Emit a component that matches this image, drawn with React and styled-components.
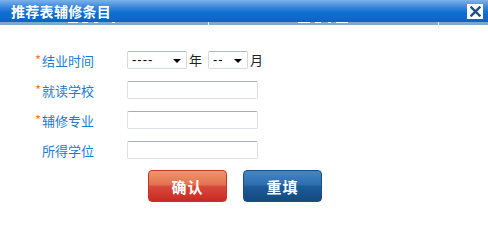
import React from 'react'
import styled, { createGlobalStyle } from 'styled-components'

const GlobalStyle = createGlobalStyle`
    html, body {
        margin: 0;
        padding: 0;
        background: #ffffff;
    }
    body {
        font-family: "Noto Sans CJK SC", "Liberation Sans", sans-serif;
    }
`

const rows = [
    { label: '结业时间', required: true, kind: 'date' },
    { label: '就读学校', required: true },
    { label: '辅修专业', required: true },
    { label: '所得学位', required: false },
]

const App = () => {
    return (
        <Dialog>
            <GlobalStyle />
            <TitleBar>
                <Title>推荐表辅修条目</Title>
                <Close aria-label="关闭">
                    <svg width="11" height="11" viewBox="0 0 11 11">
                        <path d="M1.5 1.5 L9.5 9.5 M9.5 1.5 L1.5 9.5" stroke="#1f4f86" strokeWidth="2.4" strokeLinecap="square" />
                    </svg>
                </Close>
            </TitleBar>
            <Strip>
                <StripCell width={208}>
                    <Bits left={68} width={10} />
                    <Bits left={82} width={6} />
                    <Bits left={94} width={4} />
                    <Bits left={112} width={3} />
                </StripCell>
                <StripCell width={229}>
                    <Bits left={89} width={12} />
                    <Bits left={106} width={6} />
                    <Bits left={119} width={3} />
                    <Bits left={127} width={12} />
                </StripCell>
                <StripCell />
            </Strip>

            <Form>
                {rows.map(row => (
                    <Row key={row.label}>
                        <Label>
                            <Star visible={row.required}>*</Star>
                            {row.label}
                        </Label>
                        {row.kind === 'date' ? (
                            <DateGroup>
                                <SelectBox width={60}>
                                    <Select defaultValue="">
                                        <option value="">----</option>
                                    </Select>
                                </SelectBox>
                                <Unit>年</Unit>
                                <SelectBox width={40}>
                                    <Select defaultValue="">
                                        <option value="">--</option>
                                    </Select>
                                </SelectBox>
                                <Unit>月</Unit>
                            </DateGroup>
                        ) : (
                            <Input type="text" />
                        )}
                    </Row>
                ))}
                <Buttons>
                    <Button tone="red">确认</Button>
                    <Button tone="blue">重填</Button>
                </Buttons>
            </Form>
        </Dialog>
    )
}

export default App

const Dialog = styled.div`
    width: 488px;
    height: 229px;
    background: #ffffff;
    overflow: hidden;
`
const TitleBar = styled.div`
    height: 22px;
    display: flex;
    align-items: center;
    justify-content: space-between;
    padding: 0 5px 0 11px;
    background: linear-gradient(to bottom, #7cb2ea 0%, #3f8ade 30%, #126fd2 55%, #0864c9 100%);
`
const Title = styled.h1`
    margin: 0;
    font-size: 14px;
    font-weight: 700;
    color: #ffffff;
    letter-spacing: 0.3px;
    line-height: 22px;
`
const Close = styled.button`
    width: 16px;
    height: 15px;
    margin-top: 1px;
    padding: 0;
    border: none;
    background: #ffffff;
    display: flex;
    align-items: center;
    justify-content: center;
    cursor: pointer;
`
const Strip = styled.div`
    height: 3px;
    display: flex;
    background: #7ea9cf;
`
const StripCell = styled.div`
    position: relative;
    flex: ${props => props.width ? `0 0 ${props.width}px` : '1'};
    border-right: 1px solid #e4edf6;
    &:last-child {
        border-right: none;
    }
`
const Bits = styled.span`
    position: absolute;
    top: 0;
    left: ${props => props.left}px;
    width: ${props => props.width}px;
    height: 1px;
    background: #ffffff;
`
const Form = styled.div`
    padding: 20px 0 0 35px;
`
const Row = styled.div`
    height: 30px;
    display: flex;
    align-items: center;
`
const Label = styled.label`
    width: 92px;
    font-size: 13px;
    color: #1b7ad2;
    display: flex;
    align-items: center;
`
const Star = styled.span`
    width: 7px;
    color: #f07a32;
    font-size: 13px;
    visibility: ${props => props.visible ? 'visible' : 'hidden'};
    margin-top: -2px;
`
const DateGroup = styled.div`
    display: flex;
    align-items: center;
    height: 18px;
`
const SelectBox = styled.div`
    position: relative;
    width: ${props => props.width}px;
    height: 18px;
    &::after {
        content: '';
        position: absolute;
        right: 6px;
        top: 8px;
        border-left: 4px solid transparent;
        border-right: 4px solid transparent;
        border-top: 4px solid #000000;
        pointer-events: none;
    }
`
const Select = styled.select`
    display: block;
    appearance: none;
    width: 100%;
    height: 18px;
    box-sizing: border-box;
    border: 1px solid #d5d9e0;
    border-top-color: #b4b9c2;
    border-radius: 2px;
    background: #ffffff;
    padding: 0 0 0 4px;
    font-family: "Liberation Sans", sans-serif;
    font-size: 13px;
    letter-spacing: 1px;
    line-height: 16px;
    color: #000000;
    outline: none;
`
const Unit = styled.span`
    font-size: 13px;
    line-height: 18px;
    color: #222222;
    margin: 0 6px 0 2px;
    &:last-child {
        margin-right: 0;
    }
`
const Input = styled.input`
    display: block;
    width: 131px;
    height: 18px;
    box-sizing: border-box;
    border: 1px solid #dcdfe6;
    border-top-color: #a9aeb6;
    border-radius: 2px;
    padding: 0 3px;
    font-size: 12px;
    outline: none;
`
const Buttons = styled.div`
    display: flex;
    gap: 16px;
    margin: 5px 0 0 113px;
`
const Button = styled.button`
    width: 79px;
    height: 32px;
    border-radius: 4px;
    font-family: "Noto Sans CJK SC", sans-serif;
    font-size: 15px;
    font-weight: 700;
    color: #ffffff;
    letter-spacing: 1px;
    cursor: pointer;
    border: 1px solid ${props => props.tone === 'red' ? '#c9342a' : '#1b4f84'};
    background: ${props => props.tone === 'red'
        ? 'linear-gradient(to bottom, #ee9668 0%, #e27352 45%, #d8493a 52%, #c92a22 100%)'
        : 'linear-gradient(to bottom, #4386c6 0%, #2d6eaf 45%, #1d5b98 52%, #134a80 100%)'};
`
